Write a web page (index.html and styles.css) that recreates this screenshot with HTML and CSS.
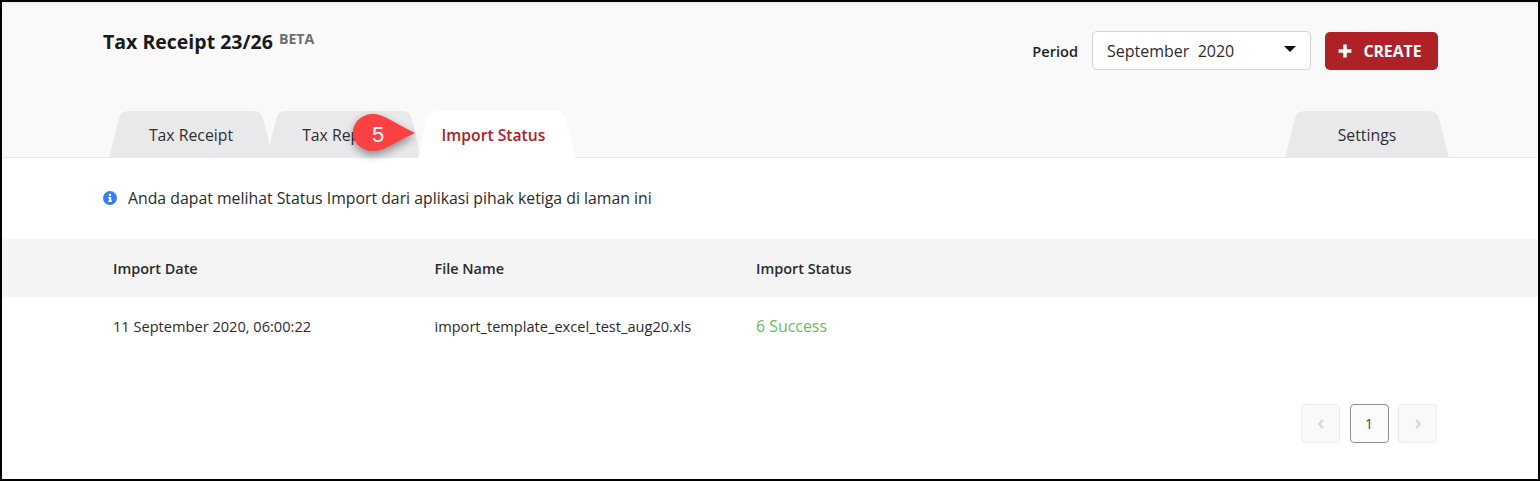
FILE: index.html
```html
<!DOCTYPE html>
<html lang="en">
<head>
<meta charset="utf-8">
<title>Tax Receipt</title>
<link rel="stylesheet" href="styles.css">
</head>
<body>
<div class="frame">
  <header class="top">
    <div class="title-row">
      <h1 class="title">Tax Receipt 23/26 <sup class="beta">BETA</sup></h1>
      <div class="actions">
        <span class="period-label">Period</span>
        <div class="select"><span>September&nbsp; 2020</span><i class="caret"></i></div>
        <button class="create"><svg class="plus" viewBox="0 0 12 12"><path d="M6 0.5v11M0.5 6h11" stroke="#fff" stroke-width="3"/></svg>CREATE</button>
      </div>
    </div>
    <nav class="tabs">
      <a class="tab"><svg class="tab-bg" viewBox="0 0 164 48" preserveAspectRatio="none"><path d="M0 48L10 8Q12 1 20 1H144Q152 1 154 8L164 48Z"/></svg><span>Tax Receipt</span></a>
      <a class="tab narrow"><svg class="tab-bg" viewBox="0 0 164 48" preserveAspectRatio="none"><path d="M0 48L10 8Q12 1 20 1H144Q152 1 154 8L164 48Z"/></svg><span>Tax Report</span></a>
      <a class="tab active"><svg class="tab-bg" viewBox="0 0 164 48" preserveAspectRatio="none"><path d="M0 48L10 8Q12 1 20 1H144Q152 1 154 8L164 48Z"/></svg><span>Import Status</span></a>
      <a class="tab settings"><svg class="tab-bg" viewBox="0 0 164 48" preserveAspectRatio="none"><path d="M0 48L10 8Q12 1 20 1H144Q152 1 154 8L164 48Z"/></svg><span>Settings</span></a>
    </nav>
    <div class="callout">
      <svg class="callout-shape" viewBox="0 0 80 64"><path d="M26 10C36 10 44 17 68 29C48 38 38 47 26 47C15 47 6 39 6 28.5C6 18 15 10 26 10Z"/></svg>
      <span class="callout-num">5</span>
    </div>
  </header>
  <main class="content">
    <p class="notice">
      <svg class="info" viewBox="0 0 14 14"><circle cx="7" cy="7" r="7" fill="#3b7ded"/><rect x="6" y="6" width="2.2" height="4.6" fill="#fff"/><rect x="5.2" y="9.6" width="3.8" height="1.2" fill="#fff"/><rect x="5.2" y="6" width="2" height="1.1" fill="#fff"/><circle cx="7" cy="4" r="1.25" fill="#fff"/></svg>
      Anda dapat melihat Status Import dari aplikasi pihak ketiga di laman ini
    </p>
    <div class="row head">
      <div>Import Date</div><div>File Name</div><div>Import Status</div>
    </div>
    <div class="row body">
      <div>11 September 2020, 06:00:22</div><div>import_template_excel_test_aug20.xls</div><div class="ok">6 Success</div>
    </div>
    <div class="pager">
      <span class="page off"><svg viewBox="0 0 8 12"><path d="M6 2L2 6l4 4" fill="none" stroke="#d4d4d4" stroke-width="2"/></svg></span>
      <span class="page current">1</span>
      <span class="page off"><svg viewBox="0 0 8 12"><path d="M2 2l4 4-4 4" fill="none" stroke="#d4d4d4" stroke-width="2"/></svg></span>
    </div>
  </main>
</div>
</body>
</html>
```
FILE: styles.css
```css
* { box-sizing: border-box; }
html, body { margin: 0; height: 100%; }
body { font-family: "Open Sans", "Liberation Sans", sans-serif; color: #2b2b2b; background: #fff; }
.frame { width: 1540px; height: 481px; border: 2px solid #000; overflow: hidden; display: flex; flex-direction: column; }
.top { position: relative; height: 156px; background: #f9f9fa; border-bottom: 1px solid #e6e6ea; box-shadow: inset 0 6px 6px -4px rgba(0,0,0,.05); padding: 0 100px 0 101px; flex: none; }
.title-row { display: flex; justify-content: space-between; align-items: flex-start; height: 108px; }
.title { margin: 27px 0 0; font-size: 19.5px; line-height: 26px; font-weight: 700; color: #1a1a1a; }
.beta { font-size: 14.2px; font-weight: 700; color: #6f6f6f; line-height: 0; vertical-align: 5px; margin-left: 1px; }
.actions { display: flex; align-items: center; margin-top: 29px; }
.period-label { font-size: 14.6px; font-weight: 600; color: #1f1f1f; margin-right: 14px; }
.select { width: 219px; height: 39px; background: #fff; border: 1px solid #d4d4d8; border-radius: 5px; display: flex; align-items: center; justify-content: space-between; padding: 1px 14px 0 14px; font-size: 16px; color: #2b2b2b; margin-right: 14px; }
.caret { width: 0; height: 0; border: 6.5px solid transparent; border-top: 6px solid #111; border-bottom: 0; margin-top: -4px; }
.create { width: 113px; height: 38px; border: 0; border-radius: 5px; background: #ad2127; color: #fff; font: 700 15.8px "Open Sans", sans-serif; display: flex; align-items: center; justify-content: center; gap: 11px; padding: 0 3px 0 0; }
.plus { width: 14px; height: 14px; }
.tabs { display: flex; height: 48px; margin-left: 6px; margin-right: -11px; }
.tab { position: relative; width: 164px; height: 48px; margin-right: -6px; display: flex; align-items: center; justify-content: center; font-size: 15.8px; color: #2f2f2f; }
.tab.narrow { width: 154px; }
.tab.narrow span { margin-right: 4px; }
.tab span { position: relative; margin-top: 1px; }
.tab-bg { position: absolute; inset: 0; width: 100%; height: 100%; fill: #e9e9eb; stroke: none; }
.tab.active { width: 157px; margin-left: 3px; color: #ad2127; font-weight: 600; font-size: 15.7px; }
.tab.active span { margin-right: 6px; }
.tab.active .tab-bg { fill: #fff; }
.tab.settings { margin-left: auto; margin-right: 0; }
.callout { position: absolute; left: 345px; top: 102px; width: 80px; height: 64px; }
.callout-shape { width: 80px; height: 64px; fill: #fb4141; filter: drop-shadow(0 4px 4px rgba(0,0,0,.4)); }
.callout-num { position: absolute; left: 25px; top: 17px; font: 22px/28px "Liberation Sans", sans-serif; color: #fff; }
.content { flex: 1; background: #fff; }
.notice { margin: 0; height: 81px; padding: 28px 0 0 101px; font-size: 15.82px; line-height: 24px; color: #2b2b2b; display: flex; align-items: flex-start; }
.info { width: 14px; height: 14px; margin: 5px 11px 0 0; flex: none; }
.row { display: grid; grid-template-columns: 321.5px 321.5px 1fr; padding-left: 111px; align-items: center; }
.head { height: 58px; background: #f4f4f4; font-size: 14.45px; font-weight: 600; color: #2b2b2b; }
.body { height: 60px; font-size: 14.6px; color: #2b2b2b; padding-bottom: 2px; }
.ok { color: #6cbb5a; font-size: 15.9px; }
.pager { display: flex; justify-content: flex-end; gap: 9.5px; padding: 47px 101px 0 0; }
.page { width: 39px; height: 39px; border-radius: 4px; display: flex; align-items: center; justify-content: center; font-size: 14px; }
.page svg { width: 8px; height: 12px; }
.off { background: #f9f9f9; border: 1px solid #ececec; }
.current { background: #fbfbfb; border: 1px solid #8f8f8f; color: #444; }
```
